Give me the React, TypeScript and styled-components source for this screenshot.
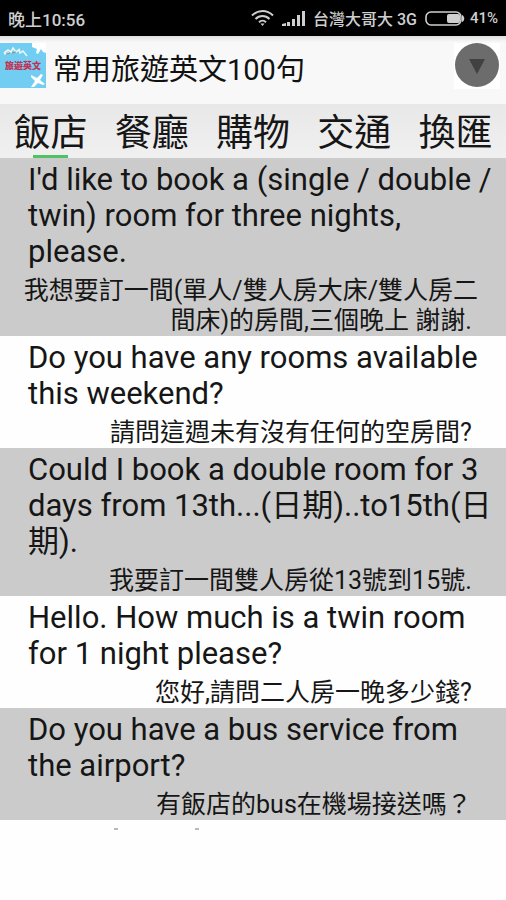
import React, { useState } from "react";
import styled, { createGlobalStyle } from "styled-components";

const GlobalStyle = createGlobalStyle`
  * { box-sizing: border-box; }
  body {
    margin: 0;
    background: #fefefe;
    color: #161616;
    font-family: Roboto, "Noto Sans CJK TC", sans-serif;
  }
`;

const Screen = styled.div`
  display: flex;
  flex-direction: column;
  min-height: 100vh;
`;

const StatusBar = styled.div`
  display: flex;
  align-items: center;
  height: 36px;
  padding: 0 8px;
  background: #000;
  color: #cfcfcf;
  font-size: 16px;
  font-weight: 500;
  white-space: nowrap;
`;

const StatusTime = styled.time`
  flex: 1;
  font-size: 17px;
`;

const StatusIcons = styled.div`
  display: flex;
  align-items: center;
  gap: 8px;
`;

const Battery = styled.div`
  display: flex;
  align-items: center;
  gap: 5px;
  font-size: 15px;
`;

const TitleBar = styled.header`
  display: flex;
  align-items: flex-start;
  height: 68px;
  padding: 7px 6px 0 0;
  background: linear-gradient(#dedede, #f8f8f8 6px);
`;

const AppIcon = styled.svg`
  flex: none;
  width: 46px;
  height: 45px;
`;

const Title = styled.h1`
  flex: 1;
  margin: 0 0 0 7px;
  color: #111;
  font-size: 29px;
  font-weight: 400;
  line-height: 55px;
  white-space: nowrap;
`;

const MenuButton = styled.button`
  width: 46px;
  height: 46px;
  padding: 0;
  border: 0;
  background: #fff;
`;

const Tabs = styled.nav`
  display: flex;
  height: 54px;
  background: linear-gradient(#e8e8e8, #f0f0f0);
`;

const Tab = styled.button<{ $active: boolean }>`
  display: flex;
  flex: 1;
  flex-direction: column;
  align-items: center;
  justify-content: flex-end;
  padding: 0;
  border: 0;
  background: none;
  color: inherit;
  font-family: inherit;
  font-size: 37px;
  line-height: 43px;
  white-space: nowrap;

  &::after {
    content: "";
    width: 35px;
    height: 3px;
    background: ${(p) => (p.$active ? "#4fc264" : "transparent")};
  }
`;

const PhraseList = styled.ul`
  margin: 0;
  padding: 0;
  list-style: none;
`;

const Phrase = styled.li`
  display: flex;
  flex-direction: column;
  gap: 6px;
  padding: 4px 0 0;

  &:nth-child(odd) {
    background: #cbcbcb;
  }
`;

const English = styled.p`
  margin: 0;
  padding: 0 0 0 28px;
  font-size: 31px;
  line-height: 36px;
  white-space: pre;
`;

const Chinese = styled.p`
  margin: 0;
  padding: 0 28px 0 0;
  font-size: 25px;
  line-height: 30px;
  text-align: right;
  white-space: pre;
`;

const NextPhraseEdge = styled.svg`
  display: block;
  width: 200px;
  height: 11px;
`;

const tabs = ["飯店", "餐廳", "購物", "交通", "換匯"];

const phrases = [
  {
    en: "I'd like to book a (single / double /\ntwin) room for three nights,\nplease.",
    zh: "我想要訂一間(單人/雙人房大床/雙人房二\n間床)的房間,三個晚上 謝謝.\u00a0",
  },
  {
    en: "Do you have any rooms available\nthis weekend?",
    zh: "請問這週未有沒有任何的空房間?\u00a0",
  },
  {
    en: "Could I book a double room for 3\ndays from 13th...(日期)..to15th(日\n期).",
    zh: "我要訂一間雙人房從13號到15號.\u00a0",
  },
  {
    en: "Hello. How much is a twin room\nfor 1 night please?",
    zh: "您好,請問二人房一晚多少錢?\u00a0",
  },
  {
    en: "Do you have a bus service from\nthe airport?",
    zh: "有飯店的bus在機場接送嗎？\u00a0",
  },
];

function WifiIcon() {
  return (
    <svg width="23" height="18" viewBox="0 0 23 18" fill="none" stroke="#cfcfcf" strokeWidth="2" aria-hidden="true">
      <path d="M1 6.5C7 .5 16 .5 22 6.5M4.5 10c4-4 10-4 14 0M8 13.2c2-2 5-2 7 0" />
      <path d="M9.5 14.5h4l-2 2.5z" fill="#cfcfcf" stroke="none" />
    </svg>
  );
}

function SignalIcon() {
  return (
    <svg width="23" height="17" viewBox="0 0 23 17" fill="#cfcfcf" aria-hidden="true">
      <path d="M0 16v-2l4-1v3zM5 12h3v4H5zM10 9h3v7h-3zM15 5h3v11h-3zM20 1h3v15h-3z" />
    </svg>
  );
}

function BatteryIcon() {
  return (
    <svg width="40" height="15" viewBox="0 0 40 15" aria-hidden="true">
      <rect x="1" y="1" width="35" height="13" rx="5" fill="none" stroke="#cfcfcf" strokeWidth="1.6" />
      <rect x="22" y="3" width="13" height="9" rx="2" fill="#cfcfcf" />
      <path d="M37 4c3 1 3 6 0 7z" fill="#cfcfcf" />
    </svg>
  );
}

function TravelIcon() {
  return (
    <AppIcon viewBox="0 0 46 45" role="img" aria-label="旅遊英文">
      <path d="M0 0h46v45H0z" fill="#72cdf3" />
      <path
        d="M32 0h14v10l-3-1-2-3-3 5-2-1 1-4-5-2zM31 32l6 3 4-4 2 1-3 5 5 4-2 1-5-2-4 4-3 0 4-6-4-4z"
        fill="#fff"
      />
      <path
        d="M4 10l4-3 3 2 2-4 3 4 4-3M4 11l5-1M19 6l1 4 3-2 4 5"
        fill="none"
        stroke="#e9f6f4"
        strokeWidth="1.6"
      />
      <path d="M6 11l4-1M12 10l4-1" stroke="#8b8e78" strokeWidth="1" />
      <text
        x="23"
        y="26"
        textAnchor="middle"
        fontFamily="'Noto Sans CJK TC', sans-serif"
        fontSize="9"
        fontWeight="900"
        fill="#c52f51"
      >
        旅遊英文
      </text>
    </AppIcon>
  );
}

export default function App() {
  const [active, setActive] = useState(0);

  return (
    <Screen>
      <GlobalStyle />
      <StatusBar>
        <StatusTime>晚上10:56</StatusTime>
        <StatusIcons>
          <WifiIcon />
          <SignalIcon />
          <span>台灣大哥大 3G</span>
          <Battery>
            <BatteryIcon />
            41%
          </Battery>
        </StatusIcons>
      </StatusBar>
      <TitleBar>
        <TravelIcon />
        <Title>常用旅遊英文100句</Title>
        <MenuButton aria-label="選單">
          <svg width="46" height="46" viewBox="0 0 46 46" aria-hidden="true">
            <circle cx="23" cy="22" r="22" fill="#6c6c6c" />
            <path d="M15 16h16l-8 15z" fill="#414141" />
          </svg>
        </MenuButton>
      </TitleBar>
      <Tabs>
        {tabs.map((label, i) => (
          <Tab key={label} $active={i === active} onClick={() => setActive(i)}>
            {label}
          </Tab>
        ))}
      </Tabs>
      <PhraseList>
        {phrases.map((phrase) => (
          <Phrase key={phrase.en}>
            <English lang="en">{phrase.en}</English>
            <Chinese lang="zh-TW">{phrase.zh}</Chinese>
          </Phrase>
        ))}
      </PhraseList>
      <NextPhraseEdge viewBox="0 0 200 11" aria-hidden="true">
        <path d="M114 9h4M195 9h4" stroke="#777" strokeWidth="1" />
      </NextPhraseEdge>
    </Screen>
  );
}
